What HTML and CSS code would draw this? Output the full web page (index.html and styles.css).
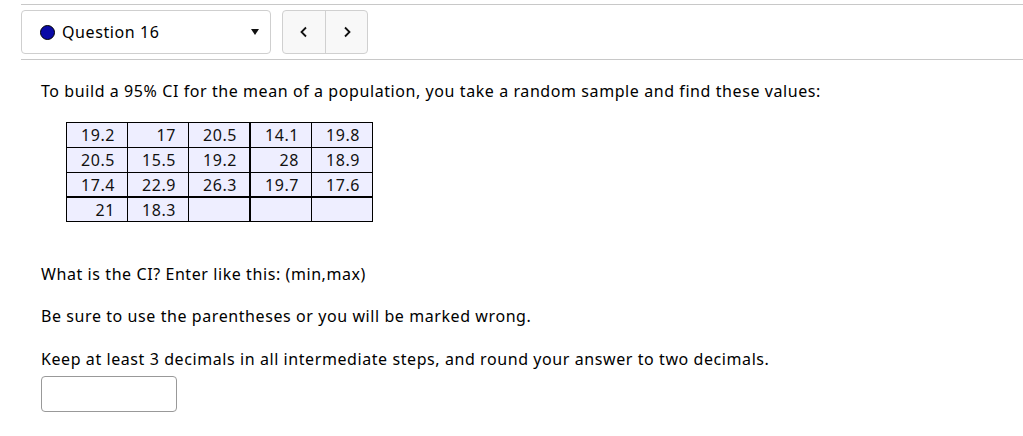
FILE: index.html
```html
<!DOCTYPE html>
<html>
<head>
<meta charset="utf-8">
<link rel="stylesheet" href="styles.css">
</head>
<body>
<div class="nav">
  <div class="select">
    <span class="dot"></span>
    <span class="qlabel">Question 16</span>
    <span class="caret"></span>
  </div>
  <div class="arrows">
    <button class="arrow"><svg width="10" height="12" viewBox="0 0 10 12"><polyline points="7,1.5 2.5,6 7,10.5" fill="none" stroke="#111" stroke-width="1.8"/></svg></button>
    <button class="arrow"><svg width="10" height="12" viewBox="0 0 10 12"><polyline points="3,1.5 7.5,6 3,10.5" fill="none" stroke="#111" stroke-width="1.8"/></svg></button>
  </div>
</div>
<div class="main">
  <p class="intro">To build a 95% CI for the mean of a population, you take a random sample and find these values:</p>
  <table class="data">
    <tr><td>19.2</td><td>17</td><td class="tr">20.5</td><td>14.1</td><td>19.8</td></tr>
    <tr><td>20.5</td><td>15.5</td><td class="tr">19.2</td><td>28</td><td>18.9</td></tr>
    <tr class="trow"><td>17.4</td><td>22.9</td><td class="tr">26.3</td><td>19.7</td><td>17.6</td></tr>
    <tr class="lrow"><td>21</td><td>18.3</td><td class="tr"></td><td></td><td></td></tr>
  </table>
  <p class="q1">What is the CI? Enter like this: (min,max)</p>
  <p class="q2">Be sure to use the parentheses or you will be marked wrong.</p>
  <p class="q3">Keep at least 3 decimals in all intermediate steps, and round your answer to two decimals.</p>
  <input class="answer" type="text">
</div>
</body>
</html>
```
FILE: styles.css
```css
html, body {
  margin: 0;
  padding: 0;
  background: #fff;
}
body {
  font-family: "Noto Sans", "DejaVu Sans", sans-serif;
  font-size: 16px;
  letter-spacing: 0.58px;
  color: #000;
}
.nav {
  margin: 4px 0 0 21px;
  border-top: 1px solid #c8c8c8;
  border-bottom: 1px solid #c8c8c8;
  padding: 5px 0;
  display: flex;
  gap: 11px;
}
.select {
  box-sizing: border-box;
  width: 250px;
  height: 44px;
  border: 1px solid #cfcfcf;
  border-radius: 4px;
  display: flex;
  align-items: center;
  padding: 0 11px 0 18px;
}
.dot {
  box-sizing: border-box;
  width: 15px;
  height: 15px;
  border-radius: 50%;
  background: #0a0aa6;
  border: 1px solid #000;
  margin-right: 7px;
}
.qlabel {
  flex: 1;
  font-size: 16px;
}
.caret {
  width: 0;
  height: 0;
  border-left: 4.5px solid transparent;
  border-right: 4.5px solid transparent;
  border-top: 6px solid #111;
}
.arrows {
  display: flex;
  box-sizing: border-box;
  height: 44px;
  border: 1px solid #d0d0d0;
  border-radius: 4px;
  background: #f8f8f8;
  overflow: hidden;
}
.arrow {
  width: 42px;
  height: 100%;
  border: 0;
  background: transparent;
  padding: 0;
  display: flex;
  align-items: center;
  justify-content: center;
}
.arrow + .arrow {
  border-left: 1px solid #d0d0d0;
}
.main {
  padding-left: 41px;
}
p {
  margin: 0;
  line-height: 20px;
}
.intro {
  margin-top: 21px;
}
.data {
  margin: 21px 0 0 25px;
  border-collapse: collapse;
  table-layout: fixed;
  background: #eeeeff;
}
.data td {
  border: 1px solid #000;
  width: 48px;
  height: 24px;
  padding: 0 12px 0 0;
  text-align: right;
  line-height: 20px;
  color: #111;
}
.data tr.trow td {
  height: 23px;
  border-bottom: 2px solid #000;
}
.data tr.lrow td {
  height: 23px;
}
.data td.tr {
  border-right: 2px solid #000;
}
.q1 {
  margin-top: 42px;
}
.q2 {
  margin-top: 22px;
}
.q3 {
  margin-top: 23px;
}
.answer {
  display: block;
  box-sizing: border-box;
  margin-top: 7px;
  width: 136px;
  height: 36px;
  border: 1px solid #999;
  border-radius: 4px;
}
```
